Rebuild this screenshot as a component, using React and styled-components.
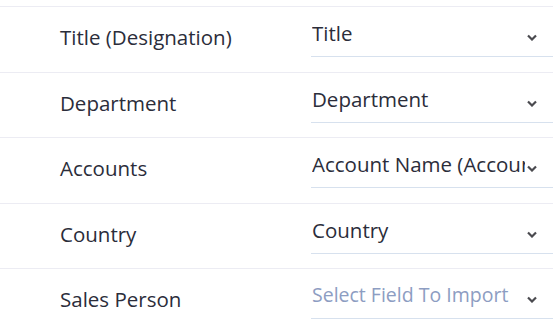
import React from 'react';
import styled, { createGlobalStyle } from 'styled-components';

const GlobalStyle = createGlobalStyle`
  body {
    margin: 0;
    background: #ffffff;
    font-family: "Open Sans", Lato, sans-serif;
  }
`;

const Page = styled.div`
  padding: 6px 4px 0 0;
`;

const List = styled.div`
  border-top: 1px solid #ececf3;
`;

const Row = styled.div`
  display: flex;
  align-items: center;
  height: 64.5px;
  border-bottom: 1px solid #ececf3;
`;

const Label = styled.div`
  width: 251px;
  padding: 0 0 4px 60px;
  box-sizing: border-box;
  font-size: 20.5px;
  line-height: 26px;
  color: #2b2d3a;
`;

const Select = styled.div`
  width: 242px;
  height: 36px;
  box-sizing: border-box;
  display: flex;
  align-items: flex-start;
  padding: 0 16px 0 1px;
  border-bottom: 1px solid #d7e1ee;
  margin-left: auto;
`;

const Value = styled.div`
  flex: 1;
  min-width: 0;
  margin-top: -2px;
  overflow: hidden;
  white-space: nowrap;
  font-size: ${({ $placeholder }) => ($placeholder ? '19.5px' : '20.5px')};
  line-height: 28px;
  color: ${({ $placeholder }) => ($placeholder ? '#8d9dc2' : '#2b2d3a')};
`;

const Chevron = styled.svg`
  flex: none;
  width: 10px;
  height: 7px;
  margin: 13px 0 0 2px;
`;

const rows = [
  { label: 'Title (Designation)', value: 'Title' },
  { label: 'Department', value: 'Department' },
  { label: 'Accounts', value: 'Account Name (Account Name)' },
  { label: 'Country', value: 'Country' },
  { label: 'Sales Person', value: 'Select Field To Import', placeholder: true },
];

const App = () => (
  <Page>
    <GlobalStyle />
    <List>
      {rows.map((r) => (
        <Row key={r.label}>
          <Label>{r.label}</Label>
          <Select>
            <Value $placeholder={r.placeholder}>{r.value}</Value>
            <Chevron viewBox="0 0 10 7">
              <path d="M1 1.5l4 4 4-4" fill="none" stroke="#4a4a4f" strokeWidth="2.2" />
            </Chevron>
          </Select>
        </Row>
      ))}
    </List>
  </Page>
);

export default App;
